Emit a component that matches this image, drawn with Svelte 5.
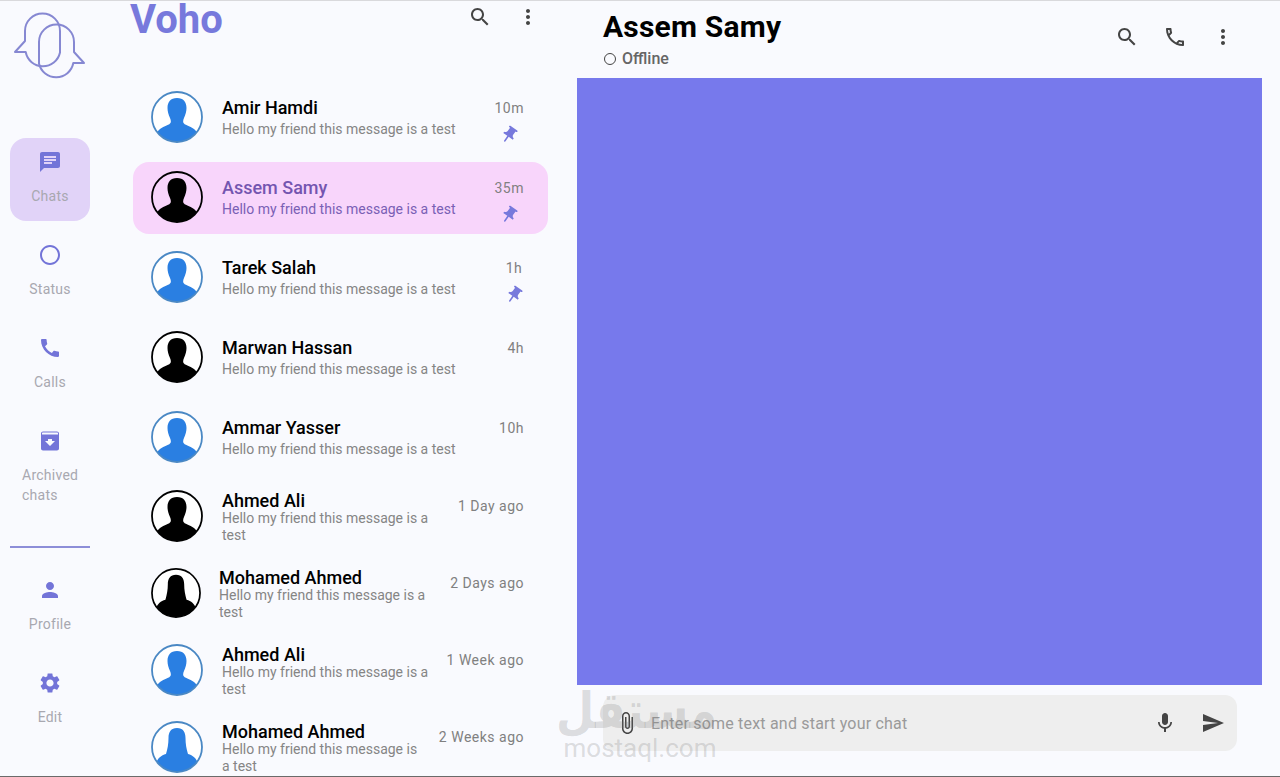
<script>
  const icons = {
    search: 'M15.5 14h-.79l-.28-.27C15.41 12.59 16 11.11 16 9.5 16 5.91 13.09 3 9.5 3S3 5.91 3 9.5 5.91 16 9.5 16c1.61 0 3.09-.59 4.23-1.57l.27.28v.79l5 4.99L20.49 19l-4.99-5zm-6 0C7.01 14 5 11.99 5 9.5S7.01 5 9.5 5 14 7.01 14 9.5 11.99 14 9.5 14z',
    more: 'M12 8c1.1 0 2-.9 2-2s-.9-2-2-2-2 .9-2 2 .9 2 2 2zm0 2c-1.1 0-2 .9-2 2s.9 2 2 2 2-.9 2-2-.9-2-2-2zm0 6c-1.1 0-2 .9-2 2s.9 2 2 2 2-.9 2-2-.9-2-2-2z',
    chat: 'M20 2H4c-1.1 0-1.99.9-1.99 2L2 22l4-4h14c1.1 0 2-.9 2-2V4c0-1.1-.9-2-2-2zM6 9h12v2H6V9zm8 5H6v-2h8v2zm4-6H6V6h12v2z',
    status: 'M12 2C6.48 2 2 6.48 2 12s4.48 10 10 10 10-4.48 10-10S17.52 2 12 2zm0 18c-4.42 0-8-3.58-8-8s3.58-8 8-8 8 3.58 8 8-3.58 8-8 8z',
    call: 'M20.01 15.38c-1.23 0-2.42-.2-3.53-.56-.35-.12-.74-.03-1.01.24l-1.57 1.97c-2.83-1.35-5.48-3.9-6.89-6.83l1.95-1.66c.27-.28.35-.67.24-1.02-.37-1.11-.56-2.3-.56-3.53 0-.54-.45-.99-.99-.99H4.19C3.65 3 3 3.24 3 3.99 3 13.28 10.73 21 20.01 21c.71 0 .99-.63.99-1.18v-3.45c0-.54-.45-.99-.99-.99z',
    phone: 'M6.54 5c.06.89.21 1.76.45 2.59l-1.2 1.2c-.41-1.2-.67-2.47-.76-3.79h1.51m9.86 12.02c.85.24 1.72.39 2.6.45v1.49c-1.32-.09-2.59-.35-3.8-.75l1.2-1.19M7.5 3H4c-.55 0-1 .45-1 1 0 9.39 7.61 17 17 17 .55 0 1-.45 1-1v-3.49c0-.55-.45-1-1-1-1.24 0-2.45-.2-3.57-.57-.1-.04-.21-.05-.31-.05-.26 0-.51.1-.71.29l-2.2 2.2c-2.83-1.45-5.15-3.76-6.59-6.59l2.2-2.2c.28-.28.36-.67.25-1.02C8.7 6.45 8.5 5.25 8.5 4c0-.55-.45-1-1-1z',
    archive: 'M5 2.5h14c1.1 0 2 .9 2 2V19.500c0 1.100-.9 2-2 2H5c-1.100 0-2-.9-2-2V4.500c0-1.100.9-2 2-2zM4 5.500h16v-1c0-.55-.45-1-1-1H5c-.55 0-1 .45-1 1zM12 17l5-5h-3v-2h-4v2H7z',
    person: 'M12 12c2.21 0 4-1.79 4-4s-1.79-4-4-4-4 1.79-4 4 1.79 4 4 4zm0 2c-2.67 0-8 1.34-8 4v2h16v-2c0-2.66-5.33-4-8-4z',
    settings: 'M19.14 12.94c.04-.3.06-.61.06-.94 0-.32-.02-.64-.07-.94l2.03-1.58c.18-.14.23-.41.12-.61l-1.92-3.32c-.12-.22-.37-.29-.59-.22l-2.39.96c-.5-.38-1.03-.7-1.62-.94l-.36-2.54c-.04-.24-.24-.41-.48-.41h-3.84c-.24 0-.43.17-.47.41l-.36 2.54c-.59.24-1.13.57-1.62.94l-2.39-.96c-.22-.08-.47 0-.59.22L2.74 8.87c-.12.21-.08.47.12.61l2.03 1.58c-.05.3-.09.63-.09.94s.02.64.07.94l-2.03 1.58c-.18.14-.23.41-.12.61l1.92 3.32c.12.22.37.29.59.22l2.39-.96c.5.38 1.03.7 1.62.94l.36 2.54c.05.24.24.41.48.41h3.84c.24 0 .44-.17.47-.41l.36-2.54c.59-.24 1.13-.56 1.62-.94l2.39.96c.22.08.47 0 .59-.22l1.92-3.32c.12-.22.07-.47-.12-.61l-2.01-1.58zM12 15.6c-1.98 0-3.6-1.62-3.6-3.6s1.62-3.6 3.6-3.6 3.6 1.62 3.6 3.6-1.62 3.6-3.6 3.6z',
    pin: 'M16 9V4h1c.55 0 1-.45 1-1s-.45-1-1-1H7c-.55 0-1 .45-1 1s.45 1 1 1h1v5c0 1.66-1.34 3-3 3v2h5.97v7l1 1 1-1v-7H19v-2c-1.66 0-3-1.34-3-3z',
    attach: 'M16.5 6v11.500c0 2.210-1.790 4-4 4s-4-1.790-4-4V5c0-1.380 1.120-2.500 2.500-2.500s2.500 1.120 2.500 2.500v10.500c0 .55-.45 1-1 1s-1-.45-1-1V6H10v9.500c0 1.380 1.120 2.500 2.500 2.500s2.500-1.120 2.500-2.500V5c0-2.210-1.790-4-4-4S7 2.790 7 5v12.500c0 3.040 2.460 5.500 5.500 5.500s5.500-2.460 5.500-5.500V6h-1.500z',
    mic: 'M12 14c1.660 0 2.990-1.340 2.990-3L15 5c0-1.660-1.340-3-3-3S9 3.340 9 5v6c0 1.660 1.340 3 3 3zm5.300-3c0 3-2.540 5.100-5.300 5.100S6.700 14 6.700 11H5c0 3.410 2.720 6.230 6 6.720V21h2v-3.280c3.280-.48 6-3.300 6-6.720h-1.700z',
    send: 'M2.010 21L23 12 2.010 3 2 10l15 2-15 2z'
  };

  const navTop = [
    { icon: 'chat', label: 'Chats', active: true },
    { icon: 'status', label: 'Status' },
    { icon: 'call', label: 'Calls' },
    { icon: 'archive', label: 'Archived chats', long: true }
  ];
  const navBottom = [
    { icon: 'person', label: 'Profile' },
    { icon: 'settings', label: 'Edit' }
  ];

  const msg = 'Hello my friend this message is a test';
  const chats = [
    { name: 'Amir Hamdi', time: '10m', color: 'blue', pinned: true },
    { name: 'Assem Samy', time: '35m', color: 'black', pinned: true, active: true },
    { name: 'Tarek Salah', time: '1h', color: 'blue', pinned: true },
    { name: 'Marwan Hassan', time: '4h', color: 'black' },
    { name: 'Ammar Yasser', time: '10h', color: 'blue' },
    { name: 'Ahmed Ali', time: '1 Day ago', color: 'black', wrap: true },
    { name: 'Mohamed Ahmed', time: '2 Days ago', color: 'black', wrap: true, female: true, small: true },
    { name: 'Ahmed Ali', time: '1 Week ago', color: 'blue', wrap: true },
    { name: 'Mohamed Ahmed', time: '2 Weeks ago', color: 'blue', wrap: true, female: true }
  ];
</script>

{#snippet icon(name, size, cls = '')}
  <svg class={cls} width={size} height={size} viewBox="0 0 24 24" fill="currentColor" fill-rule="evenodd" aria-hidden="true"><path d={icons[name]} /></svg>
{/snippet}

{#snippet navItem(item)}
  <div class="nav-item" class:active={item.active}>
    {@render icon(item.icon, 24, 'nav-icon')}
    <span class="nav-label" class:long={item.long}>{item.label}</span>
  </div>
{/snippet}

<div class="app">
  <nav class="rail">
    <svg class="logo" width="74" height="72" viewBox="12 11 74 72" fill="none" stroke="#8688d2" stroke-width="2" stroke-linejoin="round" aria-hidden="true">
      <path d="M25 31A17.500 17.500 0 0 1 60 31V52.500A17.500 17.500 0 0 1 25.700 52L15 52L25 41Z" />
      <path d="M39 42A17.500 17.500 0 0 1 74 42V52L84 63H73.300A17.500 17.500 0 0 1 39 63.500Z" />
    </svg>
    <div class="nav-group">
      {#each navTop as item}
        {@render navItem(item)}
      {/each}
    </div>
    <div class="divider"></div>
    <div class="nav-group">
      {#each navBottom as item}
        {@render navItem(item)}
      {/each}
    </div>
  </nav>

  <section class="list">
    <header class="list-head">
      <h1 class="brand">Voho</h1>
      <div class="list-actions">
        {@render icon('search', 24)}
        {@render icon('more', 24)}
      </div>
    </header>
    <div class="rows">
      {#each chats as chat}
        <div class="row" class:active={chat.active} class:wrap={chat.wrap} class:small={chat.small}>
          <svg class="avatar {chat.color}" viewBox="0 0 52 52" aria-hidden="true">
            <defs>
              <clipPath id="disc"><circle cx="26" cy="26" r="25" /></clipPath>
            </defs>
            {#if !chat.active}
              <circle cx="26" cy="26" r="25" fill="#fff" />
            {/if}
            <g clip-path="url(#disc)" class="figure">
              {#if chat.female}
                <path d="M26 7c-6 0-8.500 4-8.500 10 0 6-1 11-2.500 16-5 1.500-8 4-10 9l-3 10h48l-3-10c-2-5-5-7.500-10-9-1.500-5-2.500-10-2.500-16 0-6-2.500-10-8.500-10z" />
              {:else}
                <path d="M26 7c-6.500 0-9.500 4-9.500 10 0 3 1 7 2.500 10 .8 1.600 1 3 .7 4.500C19 34 13 35 9 38c-3 2.300-5 6-6 14h46c-1-8-3-11.700-6-14-4-3-10-4-10.700-6.500-.3-1.500-.1-2.900.7-4.500 1.500-3 2.500-7 2.500-10 0-6-3-10-9.500-10z" />
              {/if}
            </g>
            <circle class="ring" cx="26" cy="26" r="25" fill="none" stroke-width="1.800" />
          </svg>
          <div class="text">
            <div class="name">{chat.name}</div>
            <div class="sub">{msg}</div>
          </div>
          <div class="meta">
            <span class="time">{chat.time}</span>
            {#if chat.pinned}
              {@render icon('pin', 20, 'pin')}
            {/if}
          </div>
        </div>
      {/each}
    </div>
  </section>

  <main class="chat">
    <header class="chat-head">
      <div class="who">
        <h2 class="who-name">Assem Samy</h2>
        <div class="presence"><span class="dot"></span>Offline</div>
      </div>
      <div class="chat-actions">
        {@render icon('search', 24)}
        {@render icon('phone', 24)}
        {@render icon('more', 24)}
      </div>
    </header>
    <div class="panel"></div>
    <div class="composer">
      {@render icon('attach', 24, 'clip')}
      <span class="placeholder">Enter some text and start your chat</span>
      {@render icon('mic', 24)}
      {@render icon('send', 24)}
    </div>
  </main>

  <div class="watermark">
    <span class="wm-ar" lang="ar" dir="rtl">مستقل</span>
    <span class="wm-en">mostaql.com</span>
  </div>
</div>

<style>
  :global(body) {
    margin: 0;
    background: #f9fafe;
  }

  .app {
    position: relative;
    display: flex;
    box-sizing: border-box;
    width: 1280px;
    height: 777px;
    overflow: hidden;
    border-top: 1px solid #d9d9dc;
    border-bottom: 1px solid #6a6a6a;
    background: #f9fafe;
    font-family: Roboto, "Liberation Sans", sans-serif;
  }

  .rail {
    flex: 0 0 130px;
    box-sizing: border-box;
    padding: 10px 40px 0 10px;
  }

  .logo {
    display: block;
    margin: 0 0 55px 2px;
  }

  .nav-group {
    display: flex;
    flex-direction: column;
    gap: 10px;
  }

  .nav-item {
    display: flex;
    flex-direction: column;
    align-items: center;
    box-sizing: border-box;
    height: 83px;
    padding-top: 12px;
    border-radius: 16px;
    color: #7374d8;
  }

  .nav-item :global(.nav-icon) {
    flex: none;
  }

  .nav-item.active {
    background: #e1d3f8;
  }

  .nav-label {
    margin-top: 12px;
    font-size: 14px;
    line-height: 20px;
    letter-spacing: 0.25px;
    color: #a8a8b0;
  }

  .nav-label.long {
    width: 56px;
    text-align: left;
  }

  .divider {
    height: 2px;
    margin: 46px 0 18px;
    background: #8d8ed8;
  }

  .list {
    flex: 0 0 425px;
  }

  .list-head {
    display: flex;
    justify-content: space-between;
    height: 81px;
  }

  .brand {
    margin: 0;
    font-size: 40px;
    line-height: 38px;
    font-weight: 700;
    color: #7779dc;
  }

  .list-actions {
    display: flex;
    gap: 24px;
    padding: 4px 15px 0 0;
    color: #444;
  }

  .rows {
    display: flex;
    flex-direction: column;
    gap: 8px;
    width: 415px;
    margin-left: 3px;
  }

  .row {
    display: flex;
    flex: none;
    align-items: center;
    gap: 19px;
    box-sizing: border-box;
    height: 72px;
    padding: 0 24px 2px 18px;
    border-radius: 16px;
  }

  .row.wrap {
    height: 69px;
  }

  .row.small {
    gap: 18px;
  }

  .row.active {
    background: #f8d5fb;
  }

  .avatar {
    flex: none;
    width: 52px;
    height: 52px;
  }

  .row.small .avatar {
    width: 50px;
    height: 50px;
  }

  .avatar.blue .figure {
    fill: #2a7fe2;
  }

  .avatar.blue .ring {
    stroke: #4a88c4;
  }

  .avatar.black .figure {
    fill: #000;
  }

  .avatar.black .ring {
    stroke: #000;
  }

  .text {
    flex: 1;
    min-width: 0;
  }

  .name {
    font-size: 18px;
    line-height: 22px;
    font-weight: 500;
    color: #000;
  }

  .sub {
    margin-top: 2px;
    font-size: 14px;
    line-height: 17px;
    color: #858585;
  }

  .row.wrap .text {
    margin-top: 3px;
  }

  .row.wrap .sub {
    margin-top: -2px;
  }

  .row.active .name {
    color: #7455b0;
  }

  .row.active .sub {
    color: #7a5fb5;
  }

  .meta {
    display: flex;
    flex: none;
    flex-direction: column;
    align-items: center;
    align-self: flex-start;
    gap: 7px;
    padding-top: 16px;
    margin-left: -1px;
  }

  .row.wrap .meta {
    padding-top: 14px;
  }

  .time {
    font-size: 14px;
    line-height: 20px;
    letter-spacing: 0.5px;
    color: #808080;
  }

  .meta :global(.pin) {
    color: #7779dc;
    transform: rotate(35deg);
  }

  .chat {
    flex: 1;
    display: flex;
    flex-direction: column;
    min-width: 0;
    padding-left: 22px;
  }

  .chat-head {
    display: flex;
    justify-content: space-between;
    box-sizing: border-box;
    height: 77px;
    padding: 0 45px 0 26px;
  }

  .who-name {
    margin: 8px 0 0;
    font-size: 30px;
    line-height: 36px;
    font-weight: 700;
    letter-spacing: 0.2px;
    color: #000;
  }

  .presence {
    display: flex;
    align-items: center;
    gap: 6px;
    margin: 5px 0 0 1px;
    font-size: 16px;
    line-height: 18px;
    font-weight: 500;
    color: #666;
  }

  .dot {
    box-sizing: border-box;
    width: 12px;
    height: 12px;
    border: 1.5px solid #444;
    border-radius: 50%;
  }

  .chat-actions {
    display: flex;
    gap: 24px;
    padding-top: 24px;
    color: #444;
  }

  .panel {
    width: 685px;
    height: 607px;
    background: #7779ec;
  }

  .composer {
    display: flex;
    align-items: center;
    box-sizing: border-box;
    width: 634px;
    height: 56px;
    margin: 10px 0 0 26px;
    padding: 0 12px;
    gap: 24px;
    border-radius: 12px;
    background: #eeeeee;
    color: #444;
  }

  .composer :global(.clip) {
    margin-right: -12px;
  }

  .placeholder {
    flex: 1;
    font-size: 16px;
    letter-spacing: 0.2px;
    color: #9a9a9a;
  }

  .watermark {
    position: absolute;
    left: 563px;
    top: 686px;
    width: 154px;
    display: flex;
    flex-direction: column;
    pointer-events: none;
    color: rgba(120, 120, 120, 0.24);
  }

  .wm-ar {
    font-family: "DejaVu Sans", sans-serif;
    font-size: 44px;
    line-height: 48px;
    font-weight: 700;
    text-align: center;
    transform: scaleY(1.15);
  }

  .wm-en {
    font-size: 26px;
    line-height: 26px;
    text-align: center;
  }
</style>
